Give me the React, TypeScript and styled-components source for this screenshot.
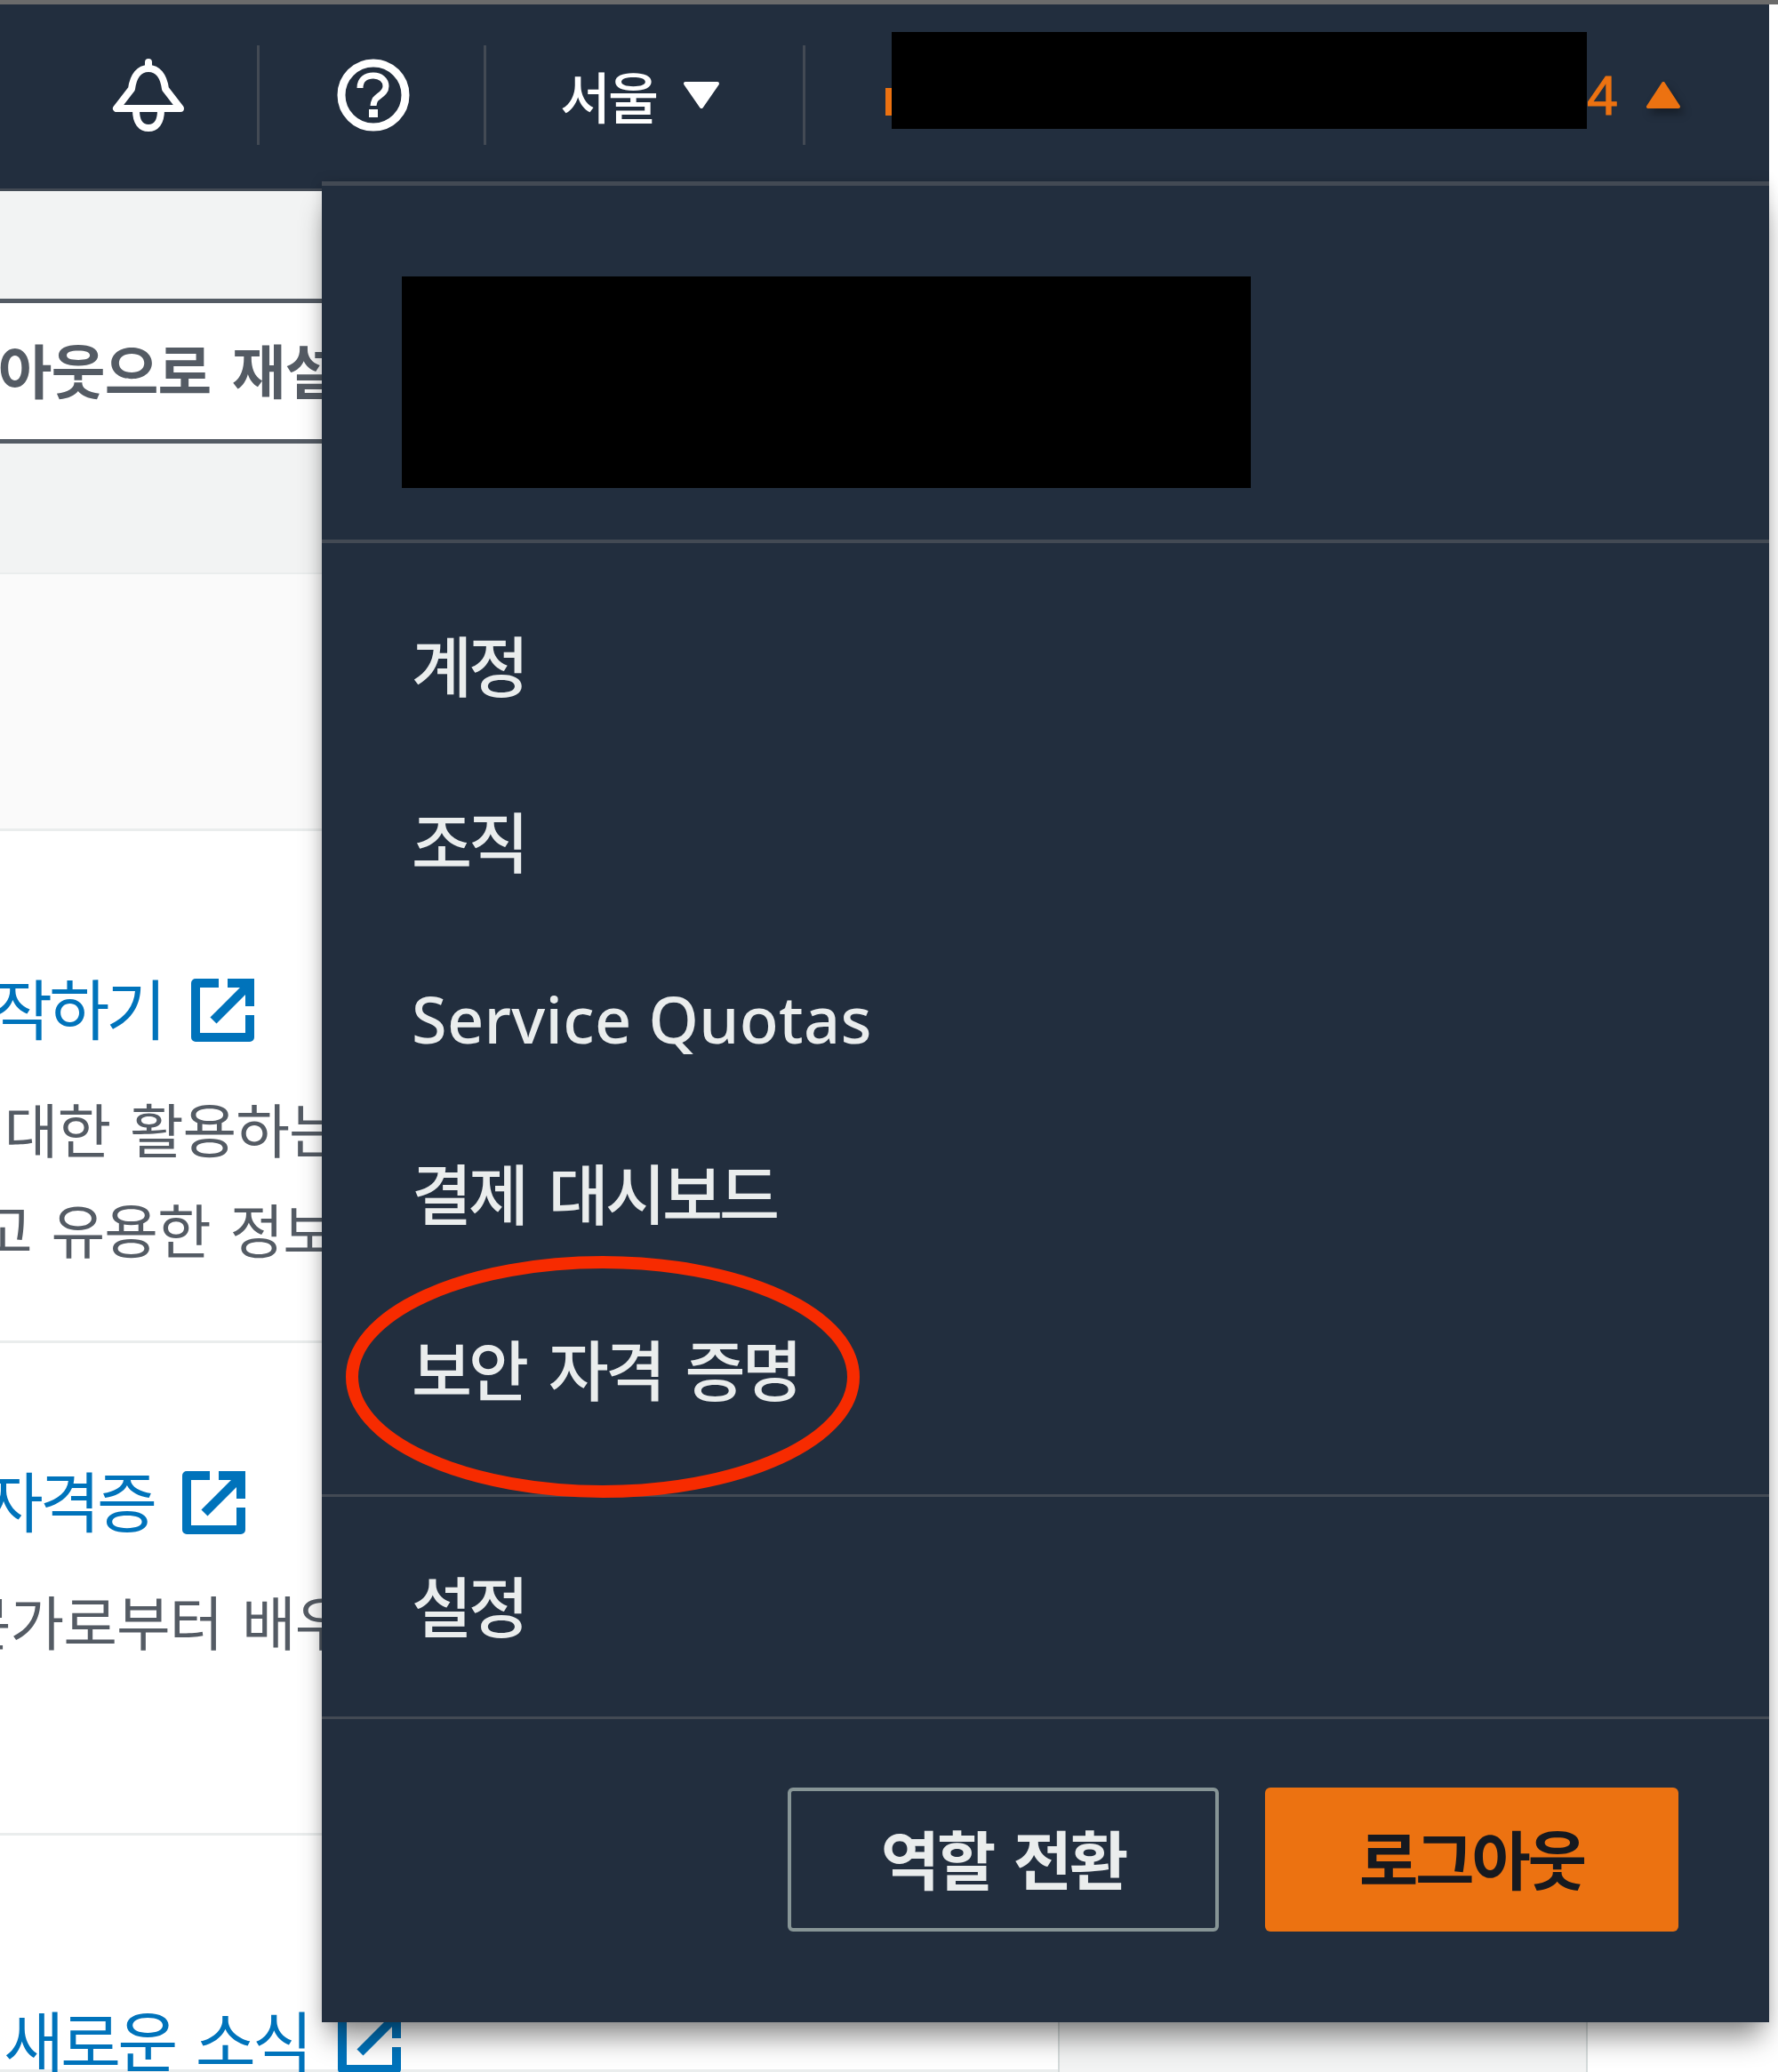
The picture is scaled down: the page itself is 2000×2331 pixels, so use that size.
import React from 'react';
import styled, { createGlobalStyle } from 'styled-components';

const KR = `"Noto Sans CJK KR", "Noto Sans", sans-serif`;

const GlobalStyle = createGlobalStyle`
  html, body {
    margin: 0;
    padding: 0;
    background: #fff;
  }
  #root {
    width: 2000px;
  }
`;

const Page = styled.div`
  position: relative;
  width: 2000px;
  height: 2331px;
  overflow: hidden;
  background: #fff;
  font-family: ${KR};
`;

const TopStrip = styled.div`
  height: 5px;
  background: #6b6b6b;
`;

const Shell = styled.div`
  width: 1990px;
`;

/* top navigation */
const Header = styled.header`
  display: flex;
  align-items: center;
  height: 210px;
  padding-bottom: 3px;
  background: #222e3e;
  border-bottom: 3px solid #434a54;
  box-sizing: border-box;
`;

const HeaderCell = styled.div<{ $width: number; $pad?: number }>`
  display: flex;
  align-items: center;
  justify-content: flex-end;
  box-sizing: border-box;
  width: ${p => p.$width}px;
  padding-right: ${p => p.$pad ?? 0}px;
`;

const Divider = styled.span`
  width: 3px;
  height: 112px;
  background: #434a54;
  flex: none;
`;

const Region = styled.span`
  color: #fff;
  font-size: 62px;
  font-weight: 500;
  line-height: 1;
  letter-spacing: -3px;
  margin-right: 30px;
`;

const NameCell = styled.div`
  display: flex;
  align-items: center;
  height: 100%;
  margin-left: 90px;
`;

const OrangeTick = styled.span`
  width: 7px;
  height: 31px;
  margin-top: 15px;
  background: #ec7211;
`;

const Redaction = styled.div<{ $w: number; $h: number }>`
  width: ${p => p.$w}px;
  height: ${p => p.$h}px;
  background: #000;
  flex: none;
`;

const HeaderRedaction = styled(Redaction)`
  margin-top: -33px;
`;

const Count = styled.span`
  color: #ec7211;
  font-family: "Liberation Sans", sans-serif;
  font-size: 63px;
  line-height: 1;
  width: 35px;
  margin-top: 1px;
  margin-right: 31px;
  -webkit-text-stroke: 1px #ec7211;
`;

const TriangleUp = styled.svg`
  filter: drop-shadow(4px 6px 5px rgba(0, 0, 0, 0.35));
`;

/* page behind the dropdown */
const Toolbar = styled.div`
  box-sizing: border-box;
  height: 431px;
  padding-top: 121px;
  background: #f2f3f3;
  border-bottom: 2px solid #eaeded;
  overflow: hidden;
`;

const ResetButton = styled.div`
  box-sizing: border-box;
  width: 1400px;
  height: 163px;
  margin-left: -200px;
  padding: 0 0 8px 73px;
  display: flex;
  align-items: center;
  white-space: nowrap;
  background: #fff;
  border: 5px solid #545b64;
  font-size: 66px;
  font-weight: 700;
  color: #545b64;
  letter-spacing: -0.8px;
  word-spacing: 9px;
`;

const SubBand = styled.div`
  height: 286px;
  background: #fafafa;
  border-bottom: 3px solid #eaeded;
`;

const Body = styled.div`
  display: flex;
  align-items: stretch;
`;

const List = styled.div`
  width: 1190px;
  overflow: hidden;
`;

const SidePanel = styled.div`
  box-sizing: border-box;
  width: 596px;
  height: 1396px;
  background: #f2f3f3;
  border-left: 2px solid #d5dbdb;
  border-right: 2px solid #d5dbdb;
`;

const ListItem = styled.div<{ $height: number; $top: number }>`
  box-sizing: border-box;
  height: ${p => p.$height}px;
  padding-top: ${p => p.$top}px;
  border-bottom: 3px solid #eaeded;
`;

const LinkRow = styled.div<{ $shift: number }>`
  display: flex;
  align-items: center;
  gap: 32px;
  height: 72px;
  margin-left: ${p => p.$shift}px;
  white-space: nowrap;
  color: #0073bb;
  font-size: 74px;
  line-height: 1;
  letter-spacing: -4px;
  word-spacing: 11px;
`;

const LinkText = styled.span`
  margin-top: -8px;
`;

const Desc = styled.p<{ $shift: number }>`
  margin: 0;
  margin-left: ${p => p.$shift}px;
  white-space: nowrap;
  color: #545b64;
  font-size: 66px;
  line-height: 113px;
  letter-spacing: -1px;
  word-spacing: 8px;
`;

const DescBlock = styled.div`
  margin-top: 40px;
`;

/* account dropdown */
const Dropdown = styled.div`
  position: absolute;
  left: 362px;
  top: 204px;
  width: 1628px;
  height: 2071px;
  background: #222e3e;
  border-top: 5px solid #434a54;
  box-sizing: border-box;
  box-shadow: 0 24px 30px -8px rgba(0, 0, 0, 0.45), 0 0 14px rgba(0, 0, 0, 0.12);
  font-family: ${KR};
`;

const AccountBlock = styled.div`
  box-sizing: border-box;
  height: 402px;
  padding: 102px 0 0 90px;
  border-bottom: 4px solid #434a54;
`;

const Menu = styled.nav`
  padding: 40px 0;
  border-bottom: 3px solid #434a54;
`;

const MenuItem = styled.div<{ $height?: number }>`
  display: flex;
  align-items: center;
  box-sizing: border-box;
  height: ${p => p.$height ?? 198}px;
  padding: 0 0 8px 101px;
  color: #eaeded;
  font-size: 74px;
  font-weight: 500;
  letter-spacing: -4px;
  word-spacing: 13px;
  line-height: 1;
`;

const LatinItem = styled(MenuItem)`
  padding-bottom: 0;
  font-family: "Noto Sans", sans-serif;
  font-size: 72px;
  font-weight: 500;
  letter-spacing: 0.3px;
  word-spacing: 0;
`;

const Footer = styled.div`
  display: flex;
  justify-content: flex-end;
  gap: 52px;
  padding: 77px 102px 0 0;
`;

const RoleButton = styled.button`
  box-sizing: border-box;
  width: 485px;
  height: 162px;
  padding: 0 0 8px;
  background: transparent;
  border: 4px solid #879596;
  border-radius: 6px;
  color: #eaeded;
  font-family: inherit;
  font-size: 72px;
  font-weight: 700;
  letter-spacing: -3px;
  word-spacing: 9px;
`;

const LogoutButton = styled(RoleButton)`
  width: 465px;
  background: #ec7211;
  border: 0;
  color: #16191f;
`;

const Annotation = styled.svg`
  position: absolute;
  left: 380px;
  top: 1404px;
`;

const BellIcon = () => (
  <svg width="82" height="82" viewBox="0 0 82 82" fill="none" stroke="#fff" strokeWidth="8" strokeLinejoin="round" strokeLinecap="round">
    <path d="M41 4v7" />
    <path d="M5 56h72L60 34c-2-15-9-23-19-23s-17 8-19 23z" />
    <path d="M27 58c0 14 6 20 14 20s14-6 14-20" />
  </svg>
);

const HelpIcon = () => (
  <svg width="82" height="82" viewBox="0 0 82 82" fill="none" stroke="#fff" strokeWidth="9">
    <circle cx="41" cy="41" r="36" />
    <path d="M26 33c0-10 7-14 15-14s14 5 14 12c0 8-8 10-12 15-1 2-2 4-2 7" strokeWidth="7" />
    <path d="M36 57h10v9H36z" fill="#fff" stroke="none" />
  </svg>
);

const CaretDown = () => (
  <svg width="42" height="32" viewBox="0 0 42 32" fill="#fff" stroke="#fff" strokeWidth="4" strokeLinejoin="round">
    <path d="M3 3h36L21 29z" />
  </svg>
);

const ExternalIcon = () => (
  <svg width="71" height="71" viewBox="0 0 71 71" fill="none" stroke="#0073bb" strokeWidth="10" style={{ flex: 'none' }}>
    <path d="M31 5H5v61h61V41" strokeLinejoin="round" />
    <path d="M41 5h25v26" />
    <path d="M25 47l37-37" />
  </svg>
);

const App: React.FC = () => {
  return (
    <Page>
      <GlobalStyle />
      <TopStrip />
      <Shell>
        <Header>
          <HeaderCell $width={289} $pad={81}><BellIcon /></HeaderCell>
          <Divider />
          <HeaderCell $width={252} $pad={83}><HelpIcon /></HeaderCell>
          <Divider />
          <HeaderCell $width={356} $pad={93}>
            <Region>서울</Region>
            <CaretDown />
          </HeaderCell>
          <Divider />
          <NameCell>
            <OrangeTick />
            <HeaderRedaction $w={782} $h={109} />
            <Count>4</Count>
            <TriangleUp width="40" height="32" viewBox="0 0 40 32" fill="#ec7211" stroke="#ec7211" strokeWidth="4" strokeLinejoin="round">
              <path d="M3 29h34L20 3z" />
            </TriangleUp>
          </NameCell>
        </Header>
        <Toolbar>
          <ResetButton>레이아웃으로 재설정</ResetButton>
        </Toolbar>
        <SubBand />
        <Body>
          <List>
            <ListItem $height={576} $top={165}>
              <LinkRow $shift={-73}><LinkText>시작하기</LinkText><ExternalIcon /></LinkRow>
              <DescBlock>
                <Desc $shift={-256}>서비스에 대한 활용하는</Desc>
                <Desc $shift={-404}>자세히 알아보고 유용한 정보</Desc>
              </DescBlock>
            </ListItem>
            <ListItem $height={554} $top={143}>
              <LinkRow $shift={-171}><LinkText>보안 자격증</LinkText><ExternalIcon /></LinkRow>
              <DescBlock>
                <Desc $shift={-108}>전문가로부터 배우기</Desc>
              </DescBlock>
            </ListItem>
            <ListItem $height={266} $top={196}>
              <LinkRow $shift={4}><LinkText>새로운 소식</LinkText><ExternalIcon /></LinkRow>
            </ListItem>
          </List>
          <SidePanel />
        </Body>
      </Shell>

      <Dropdown>
        <AccountBlock>
          <Redaction $w={955} $h={238} />
        </AccountBlock>
        <Menu>
          <MenuItem>계정</MenuItem>
          <MenuItem>조직</MenuItem>
          <LatinItem>Service Quotas</LatinItem>
          <MenuItem>결제 대시보드</MenuItem>
          <MenuItem>보안 자격 증명</MenuItem>
        </Menu>
        <Menu>
          <MenuItem $height={167}>설정</MenuItem>
        </Menu>
        <Footer>
          <RoleButton>역할 전환</RoleButton>
          <LogoutButton>로그아웃</LogoutButton>
        </Footer>
      </Dropdown>

      <Annotation width="600" height="290" viewBox="0 0 600 290" fill="none">
        <ellipse cx="298" cy="145" rx="282" ry="129" stroke="#f72b00" strokeWidth="14" />
      </Annotation>
    </Page>
  );
};

export default App;
